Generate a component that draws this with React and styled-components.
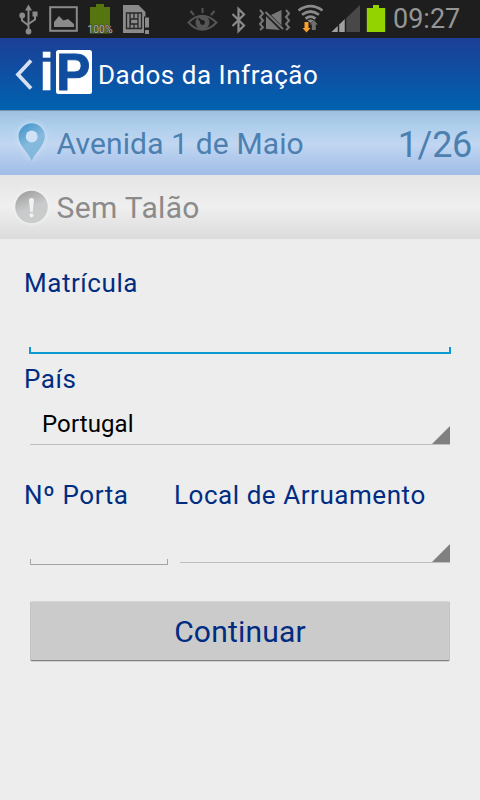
import styled, { createGlobalStyle } from "styled-components";

const navy = "#002c82";

export default function App() {
  return (
    <>
      <GlobalStyle />
      <Screen>
        <StatusBar>
          <StatusIcons />
          <Clock>09:27</Clock>
        </StatusBar>
        <Header>
          <BackArrow />
          <Logo />
          <Title>Dados da Infração</Title>
        </Header>
        <StreetBar>
          <PinIcon />
          <BarText>Avenida 1 de Maio</BarText>
          <Counter>1/26</Counter>
        </StreetBar>
        <TicketBar>
          <AlertIcon />
          <BarText $spacing="0.35px">Sem Talão</BarText>
        </TicketBar>
        <Form>
          <Label htmlFor="plate">Matrícula</Label>
          <PlateInput id="plate" />
          <Label as="span">País</Label>
          <Select $height="50px">
            Portugal
            <Corner />
          </Select>
          <Columns>
            <Column $width="150px">
              <Label htmlFor="door">Nº Porta</Label>
              <DoorInput id="door" />
            </Column>
            <Column $width="276px">
              <Label as="span">Local de Arruamento</Label>
              <Select $height="52px">
                <Corner />
              </Select>
            </Column>
          </Columns>
          <Button>Continuar</Button>
        </Form>
      </Screen>
    </>
  );
}

function StatusIcons() {
  return (
    <svg width="390" height="38" viewBox="0 0 390 38">
      {/* usb */}
      <g fill="none" stroke="#8a8a8a" strokeWidth="2">
        <path d="M28.500 9V31M22 17v3.500l6.500 5M35 15v4.500l-6.500 4.500" />
      </g>
      <g fill="#8a8a8a">
        <path d="M28.500 4.500L32 10.500H25z" />
        <circle cx="22.200" cy="15.500" r="2.900" />
        <rect x="32.500" y="11.500" width="5" height="5" />
        <circle cx="28.500" cy="31.500" r="2.900" />
      </g>
      {/* gallery */}
      <rect x="50.200" y="7.200" width="26.600" height="23.600" fill="none" stroke="#8a8a8a" strokeWidth="2" />
      <path d="M54 27V22L59 16L63.500 20.500L68 19L74 24V27z" fill="#8a8a8a" />
      {/* charge level */}
      <path d="M96 4h8v3h6v26.500H90V7h6z" fill="#55750e" />
      <text x="87.500" y="32.500" fontSize="10.500" fontFamily="Roboto, sans-serif" fill="#b0b0b0" stroke="#3a3a3a" strokeWidth="1" paintOrder="stroke" textLength="25" lengthAdjust="spacingAndGlyphs">
        100%
      </text>
      {/* sim card */}
      <path d="M123 5h15.500l7 7v21H123z" fill="#8a8a8a" />
      <path d="M126.500 13h15v15.500h-15z" fill="none" stroke="#292929" strokeWidth="1.300" />
      <path d="M130 13v15.500M134 13v5.500M138 13v15.500M134 24v4.500M130.500 19h7.500v5h-7.500z" fill="none" stroke="#292929" strokeWidth="1.300" />
      <path d="M144 16.500h6v18h-6z" fill="#1e1e1e" />
      <path d="M145 17.500h4v10h-4zM145 30h4v4h-4z" fill="#8a8a8a" />
      {/* smart stay */}
      <g fill="none" stroke="#555" strokeWidth="2">
        <path d="M188.500 22.500Q202 9 216.500 22.500Q202 37 188.500 22.500z" />
        <path d="M202.500 8v5M190.500 11l3.500 4M214.500 11l-3.500 4" />
      </g>
      <circle cx="202.500" cy="22.500" r="7" fill="#555" />
      <circle cx="202.500" cy="22.500" r="2.400" fill="#1e1e1e" />
      <path d="M202 22L198.500 18.500" stroke="#1e1e1e" strokeWidth="2" />
      {/* bluetooth */}
      <path d="M232.500 14L244 25.500L238.500 31V9L244 14.500L232.500 26" fill="none" stroke="#8a8a8a" strokeWidth="2.200" />
      {/* vibrate, muted */}
      <path d="M270 15.500l11.500-5.500v20L266 29V16z" fill="#777" />
      <path d="M263.500 10.500L284 31" stroke="#1e1e1e" strokeWidth="4.500" />
      <path d="M265.500 12L283 29" stroke="#777" strokeWidth="2" />
      <g fill="none" stroke="#777" strokeWidth="2">
        <path d="M260 10l3 3.500-3 3.500 3 3.500-3 3.500 3 3.500-3 2.500" />
        <path d="M286 10l3 3.500-3 3.500 3 3.500-3 3.500 3 3.500-3 2.500" />
      </g>
      {/* wifi */}
      <g fill="none" stroke="#8a8a8a" strokeWidth="2.700">
        <path d="M298.500 10.500Q310.500 1.800 322.500 10.500" />
        <path d="M302 14.800Q310.500 8.200 319 14.800" />
        <path d="M305.500 18.600Q310.500 14.600 315.500 18.600" />
      </g>
      <path d="M307.500 20.500Q310.500 18.500 313.500 20.500L310.500 23z" fill="#8a8a8a" />
      <path d="M304.500 22h4v6h2l-4 4.500-4-4.500h2z" fill="#f9a12c" />
      <path d="M311.800 30v-5.500h-2l4-4.500 4 4.500h-2v5.500z" fill="#6f6f6f" />
      {/* signal */}
      <path d="M331.500 32L360 5V32z" fill="#484848" />
      <path d="M331.500 32L345 19V32z" fill="#a0a0a0" />
      <path d="M338.500 25v7M345.500 18v14" stroke="#1e1e1e" strokeWidth="1.500" />
      {/* battery */}
      <path d="M373 5h6v3h6.200v24H366.800V8h6.200z" fill="#93d300" />
    </svg>
  );
}

function BackArrow() {
  return (
    <svg width="43" height="72" viewBox="0 38 43 72">
      <path d="M31 60.500L18 74.500L31 88.500" fill="none" stroke="#d5e1f1" strokeWidth="3.800" />
    </svg>
  );
}

function Logo() {
  return (
    <LogoSvg width="55" height="72" viewBox="43 38 55 72">
      <text x="39.500" y="90" fontSize="51" fill="#fff" stroke="#fff" strokeWidth="0.500">i</text>
      <rect x="56" y="50" width="36" height="44" rx="2.500" fill="#fff" />
      <text x="56.300" y="89.700" fontSize="51" fill="#114d9f" stroke="#114d9f" strokeWidth="0.900">P</text>
    </LogoSvg>
  );
}

function PinIcon() {
  return (
    <PinSvg width="56" height="64" viewBox="0 111 56 64">
      <defs>
        <linearGradient id="pin" x1="0" y1="0" x2="0.500" y2="1">
          <stop offset="0" stopColor="#3b91c9" />
          <stop offset="0.600" stopColor="#85bade" />
          <stop offset="1" stopColor="#84b8d8" />
        </linearGradient>
      </defs>
      <path
        d="M31.700 161C28.500 153 18.500 145 18.500 136.500a13.200 13.200 0 0 1 26.400 0C44.900 145 35 153 31.700 161z"
        fill="url(#pin)"
      />
      <circle cx="31.700" cy="136.500" r="5.900" fill="#d0e2f6" />
    </PinSvg>
  );
}

function AlertIcon() {
  return (
    <AlertSvg width="56" height="64" viewBox="0 175 56 64">
      <defs>
        <linearGradient id="alert" x1="0.200" y1="0" x2="0.600" y2="1">
          <stop offset="0" stopColor="#9d9d9d" />
          <stop offset="0.550" stopColor="#c9cacb" />
          <stop offset="1" stopColor="#cbcccc" />
        </linearGradient>
      </defs>
      <circle cx="31.500" cy="207" r="16.300" fill="url(#alert)" />
      <path d="M29 200.500q0-2.500 2.500-2.500t2.500 2.500l-1.300 11.500h-2.400z" fill="#f2f2f2" />
      <circle cx="31.500" cy="215.300" r="2" fill="#f2f2f2" />
    </AlertSvg>
  );
}

const GlobalStyle = createGlobalStyle`
  * {
    box-sizing: border-box;
  }
  body {
    margin: 0;
    background-color: #ededed;
    font-family: Roboto, sans-serif;
  }
`;

const Screen = styled.div`
  width: 480px;
  height: 800px;
  background-color: #ededed;
  overflow: hidden;
`;

const StatusBar = styled.div`
  height: 38px;
  background-color: #1e1e1e;
  display: flex;
`;

const Clock = styled.span`
  padding-left: 3px;
  font-size: 27px;
  line-height: 38px;
  color: #969696;
`;

const Header = styled.header`
  height: 73px;
  background: linear-gradient(#1c3f96, #0062b0);
  border-bottom: 1px solid #7691ad;
  display: flex;
`;

const LogoSvg = styled.svg`
  font-family: "Liberation Sans", Arial, sans-serif;
  font-weight: 700;
  overflow: visible;
`;

const Title = styled.h1`
  margin: 0;
  padding-top: 1px;
  font-size: 26px;
  font-weight: 400;
  line-height: 72px;
  letter-spacing: 0.53px;
  color: #fff;
  white-space: nowrap;
`;

const Bar = styled.div`
  height: 64px;
  display: flex;
  line-height: 66px;
`;

const StreetBar = styled(Bar)`
  background: linear-gradient(#9fc0de, #acceeb 22%, #c1d6f1 52%, #9fbde8);
  color: #4c80b0;
`;

const TicketBar = styled(Bar)`
  background: linear-gradient(#e5e5e5, #efefef 50%, #dbdbdb);
  color: #8b8b8b;
`;

const BarText = styled.span`
  padding-left: 0.5px;
  font-size: 30px;
  letter-spacing: ${(props) => props.$spacing || "0.13px"};
`;

const Counter = styled.span`
  margin-left: auto;
  padding-right: 8px;
  font-size: 36px;
  line-height: 68px;
  letter-spacing: -0.3px;
`;

const PinSvg = styled.svg`
  filter: drop-shadow(0 0 3px #d5e6f8);
`;

const AlertSvg = styled.svg`
  filter: drop-shadow(0 0 2px #fafafa);
`;

const Form = styled.form`
  padding: 28px 30px 0 24px;
`;

const Label = styled.label`
  display: block;
  font-size: 26px;
  line-height: 32px;
  letter-spacing: 0.55px;
  color: ${navy};
  white-space: nowrap;
`;

const Field = styled.input`
  display: block;
  padding: 0;
  border: 0;
  outline: 0;
  font: 24px Roboto, sans-serif;
  background-color: transparent;
  background-repeat: no-repeat;
`;

const PlateInput = styled(Field)`
  width: 422px;
  height: 55px;
  margin: 0 0 9px 5px;
  border-bottom: 2px solid #0a9ad0;
  background-image: linear-gradient(#0a9ad0, #0a9ad0),
    linear-gradient(#0a9ad0, #0a9ad0);
  background-size: 2px 5px;
  background-position: left bottom, right bottom;
`;

const DoorInput = styled(Field)`
  width: 138px;
  height: 54px;
  margin-left: 6px;
  border-bottom: 1px solid #a3a3a3;
  background-image: linear-gradient(#a3a3a3, #a3a3a3),
    linear-gradient(#a3a3a3, #a3a3a3);
  background-size: 1px 5px;
  background-position: left bottom, right bottom;
`;

const Select = styled.div`
  height: ${(props) => props.$height};
  margin-left: 6px;
  padding-left: 12px;
  border-bottom: 1px solid #bfbfbf;
  display: flex;
  align-items: flex-end;
  font-size: 24px;
  line-height: 39px;
  letter-spacing: 0.1px;
  color: #000;
`;

const Corner = styled.i`
  width: 18px;
  height: 18px;
  margin-left: auto;
  background-color: #808080;
  clip-path: polygon(100% 0, 100% 100%, 0 100%);
`;

const Columns = styled.div`
  display: flex;
  margin-top: 34px;
`;

const Column = styled.div`
  width: ${(props) => props.$width};
`;

const Button = styled.button`
  display: block;
  width: 420px;
  height: 60px;
  margin: 36px 0 0 6px;
  padding: 0;
  border: 1px solid #c3c3c3;
  border-top-color: #d6d6d6;
  border-bottom-color: #828282;
  border-radius: 2px;
  box-shadow: 0 1px 0 #d0d0d0;
  background-color: #cbcbcb;
  font: 30px Roboto, sans-serif;
  letter-spacing: 0.2px;
  color: ${navy};
`;
